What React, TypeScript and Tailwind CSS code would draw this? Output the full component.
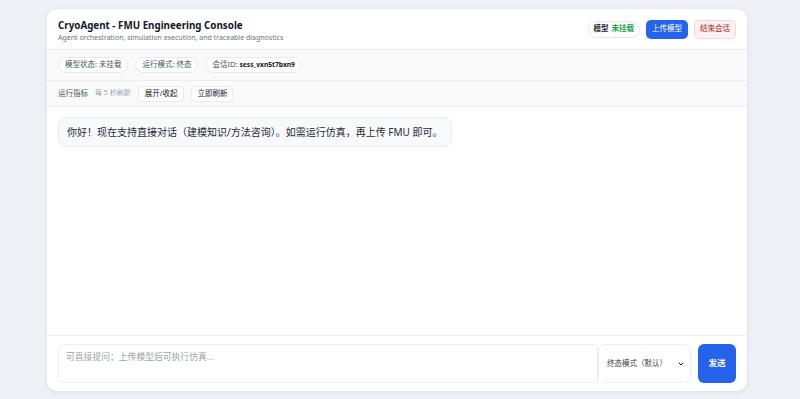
import React from "react";

export default function App() {
  const font = { fontFamily: '"Noto Sans", "Noto Sans CJK SC", sans-serif' };
  return (
    <div className="min-h-[399px] bg-[#eef0f5] pt-[9px] pl-[47px]" style={font}>
      <div className="w-[700px] h-[382px] bg-white rounded-[10px] shadow-[0_1px_4px_rgba(15,23,42,0.08)] flex flex-col overflow-hidden">
        {/* Header */}
        <div className="h-[41px] flex items-center justify-between px-[11px] border-b border-[#eceef2]">
          <div className="flex flex-col pt-[3px]">
            <div className="text-[9.8px] font-bold text-[#111827] leading-[13px]">CryoAgent - FMU Engineering Console</div>
            <div className="text-[7px] text-[#6b7280] leading-[11px]">Agent orchestration, simulation execution, and traceable diagnostics</div>
          </div>
          <div className="flex items-center gap-[6px]">
            <div className="h-[17px] px-[5px] rounded-full border border-[#e5e7eb] flex items-center text-[7.5px] gap-[3px]">
              <span className="font-bold text-[#1f2937]">模型</span>
              <span className="font-bold text-[#16a34a]">未挂载</span>
            </div>
            <button className="h-[19px] px-[6px] rounded-[5px] bg-[#2563eb] text-white text-[7.5px] flex items-center">上传模型</button>
            <button className="h-[19px] px-[5px] rounded-[5px] bg-[#fef2f2] border border-[#fbd5d5] text-[#b42318] text-[7.5px] flex items-center">结束会话</button>
          </div>
        </div>
        {/* Chips row */}
        <div className="h-[31px] bg-[#fafafa] border-b border-[#eceef2] flex items-center gap-[7px] px-[11px]">
          <div className="h-[16px] px-[6px] rounded-full bg-white border border-[#e8eaee] flex items-center text-[7.5px] text-[#4b5563]">模型状态: 未挂载</div>
          <div className="h-[16px] px-[6px] rounded-full bg-white border border-[#e8eaee] flex items-center text-[7.5px] text-[#4b5563]">运行模式: 终态</div>
          <div className="h-[16px] px-[6px] rounded-full bg-white border border-[#e8eaee] flex items-center text-[7.5px] text-[#4b5563]">
            会话ID:&nbsp;<span className="font-bold text-[#111827] text-[6.7px]">sess_vxn5t7bxn9</span>
          </div>
        </div>
        {/* Metrics row */}
        <div className="h-[26px] bg-[#fafafa] border-b border-[#eceef2] flex items-center px-[11px]">
          <span className="text-[7.5px] text-[#4b5563]">运行指标</span>
          <span className="ml-[7px] text-[7px] text-[#9ca3af]">每 5 秒刷新</span>
          <button className="ml-[7px] h-[16px] px-[6px] rounded-[4px] bg-white border border-[#e8eaee] text-[7.5px] text-[#111827] flex items-center">展开/收起</button>
          <button className="ml-[7px] h-[16px] px-[5px] rounded-[4px] bg-white border border-[#e8eaee] text-[7.5px] text-[#111827] flex items-center">立即刷新</button>
        </div>
        {/* Messages */}
        <div className="flex-1 px-[11px] pt-[10px]">
          <div className="inline-flex h-[30px] items-center px-[8px] rounded-[8px] bg-[#f8f9fb] border border-[#eceef2] text-[10px] text-[#1f2937]">
            你好！现在支持直接对话（建模知识/方法咨询）。如需运行仿真，再上传 FMU 即可。
          </div>
        </div>
        {/* Footer */}
        <div className="border-t border-[#eceef2] px-[11px] pt-[8px] pb-[8px] flex items-stretch">
          <textarea
            className="flex-1 h-[39px] resize-none rounded-l-[7px] border border-[#eceef2] px-[7px] py-[6px] text-[8.8px] text-[#374151] placeholder:text-[#9ca3af] outline-none"
            placeholder="可直接提问；上传模型后可执行仿真..."
          />
          <div className="w-[93px] h-[39px] rounded-[7px] border border-[#eceef2] flex items-center justify-between pl-[8px] pr-[5px] text-[7.5px] text-[#374151]">
            <span>终态模式（默认）</span>
            <svg width="8" height="8" viewBox="0 0 24 24" fill="none" stroke="#111827" strokeWidth="3" strokeLinecap="round" strokeLinejoin="round"><path d="M6 9l6 6 6-6" /></svg>
          </div>
          <button className="ml-[7px] w-[38px] h-[39px] rounded-[6px] bg-[#2563eb] text-white text-[8.5px] font-bold">发送</button>
        </div>
      </div>
    </div>
  );
}
